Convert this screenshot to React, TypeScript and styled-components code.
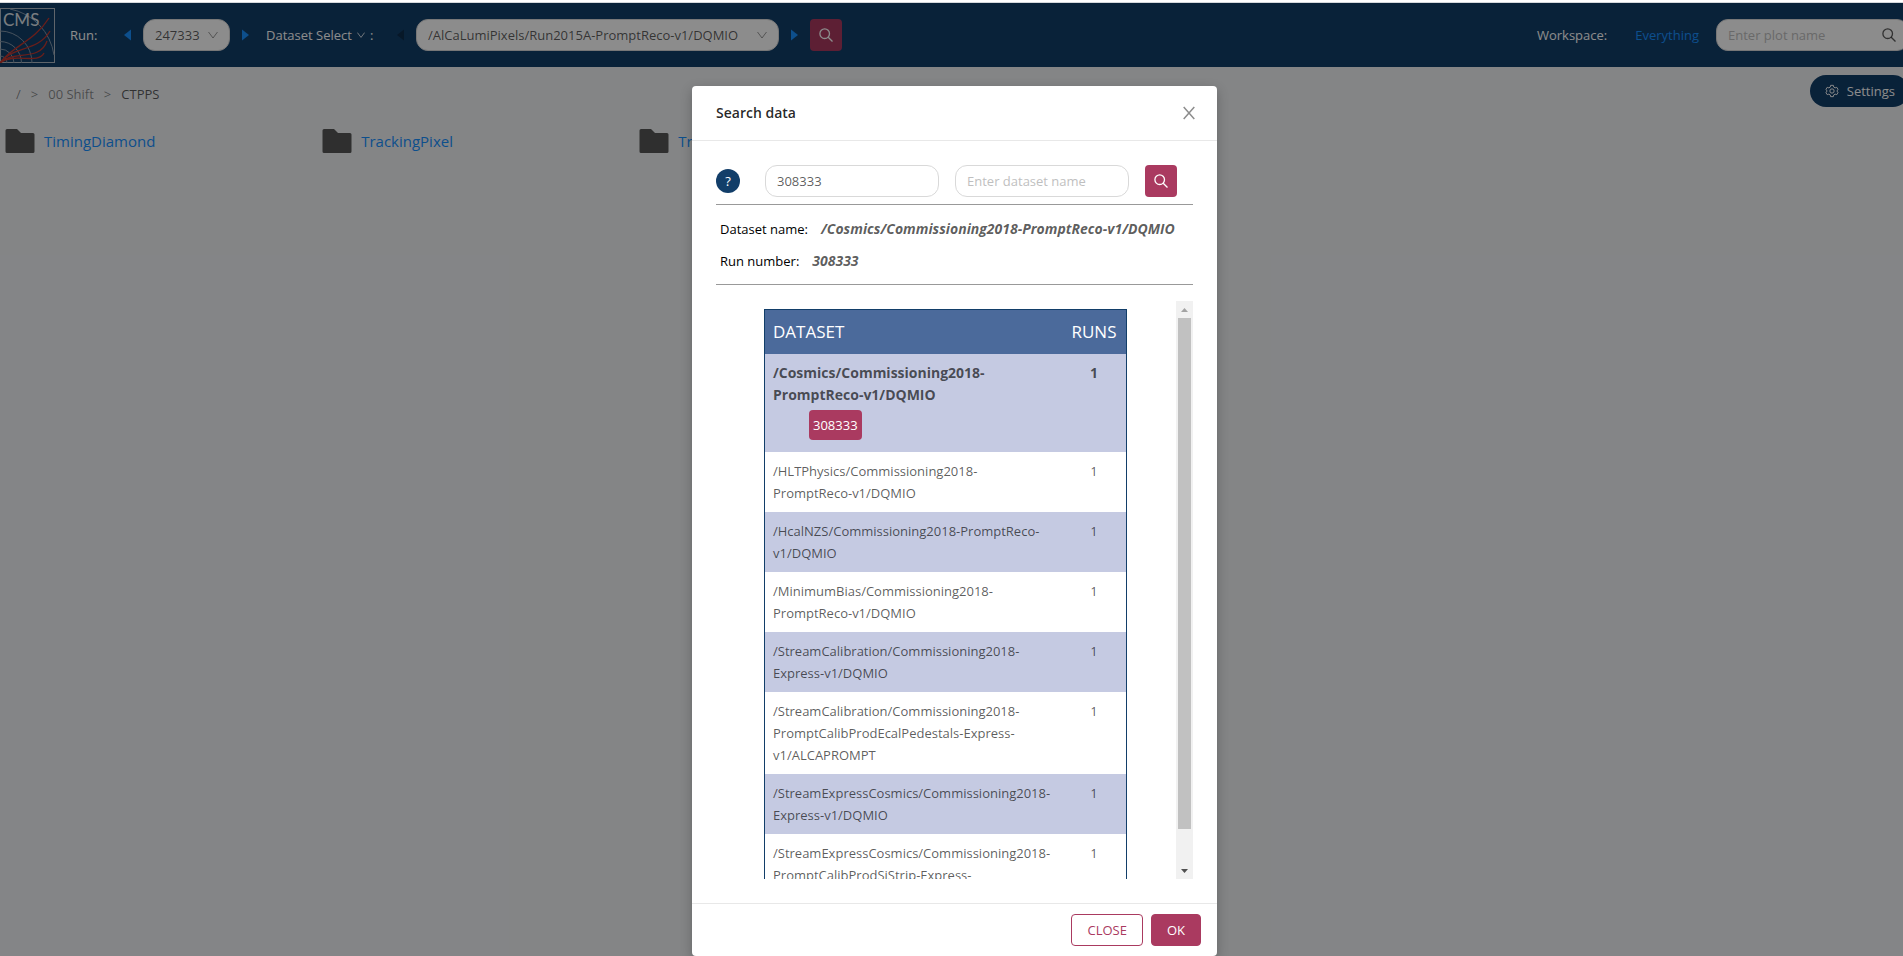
import React from 'react';
import styled, { createGlobalStyle } from 'styled-components';

const navy = '#123e69';
const pink = '#aa3a60';
const link = '#1890ff';

const GlobalStyle = createGlobalStyle`
  *, *::before, *::after { box-sizing: border-box; }
  body {
    margin: 0;
    background: #f0f2f5;
    color: rgba(0, 0, 0, 0.65);
    font-family: "Open Sans", "Noto Sans", sans-serif;
    font-size: 13px;
    line-height: 22px;
  }
  button, input, select { font: inherit; }
  svg { display: block; flex: none; }
`;

const Page = styled.div`
  display: flex;
  flex-direction: column;
  min-height: 100vh;
  overflow: hidden;
`;

const TopStrip = styled.div`
  height: 3px;
  background: #fff;
  border-bottom: 1px solid #d5d8dc;
`;

const Stage = styled.div`
  position: relative;
  flex: 1;
  display: grid;
  overflow: hidden;
`;

const Shell = styled.div`
  grid-area: 1 / 1;
  min-width: 0;
`;

const Overlay = styled.div`
  grid-area: 1 / 1;
  z-index: 1;
  display: flex;
  justify-content: center;
  align-items: flex-start;
  padding: 83px 0 0 6px;
  background: rgba(0, 0, 0, 0.45);
`;

const TopBar = styled.header`
  display: flex;
  align-items: center;
  height: 64px;
  margin-right: -6px;
  background: ${navy};
  color: #fff;
`;

const Logo = styled.a`
  display: block;
  margin-right: 15px;
`;

const BarLabel = styled.label<{ $width: number; $indent?: number }>`
  display: flex;
  align-items: center;
  gap: 5px;
  width: ${(p) => p.$width}px;
  padding-left: ${(p) => p.$indent ?? 0}px;
`;

const Step = styled.button`
  display: flex;
  align-items: center;
  justify-content: center;
  width: 31px;
  height: 32px;
  padding: 0;
  border: 0;
  background: none;
  color: ${link};
  &:disabled { color: #0e2c49; }
`;

const SelectBox = styled.span<{ $width: number }>`
  display: grid;
  align-items: center;
  width: ${(p) => p.$width}px;
  color: rgba(0, 0, 0, 0.4);
  & > * { grid-area: 1 / 1; }
  & > svg { justify-self: end; margin-right: 12px; pointer-events: none; }
`;

const Select = styled.select`
  appearance: none;
  width: 100%;
  height: 32px;
  padding: 0 0 0 11px;
  border: 1px solid #d9d9d9;
  border-radius: 12px;
  background: #fff;
  color: rgba(0, 0, 0, 0.65);
`;

const IconButton = styled.button`
  display: flex;
  align-items: center;
  justify-content: center;
  width: 32px;
  height: 32px;
  padding: 0;
  border: 0;
  border-radius: 4px;
  background: ${pink};
  color: #fff;
`;

const Workspace = styled.div`
  display: flex;
  align-items: center;
  gap: 28px;
  margin-left: auto;
  margin-right: 17px;
`;

const Anchor = styled.a`
  color: ${link};
  text-decoration: none;
`;

const PlotSearch = styled.div`
  display: flex;
  align-items: center;
  width: 193px;
  height: 32px;
  padding: 0 12px 0 11px;
  border: 1px solid #d9d9d9;
  border-radius: 12px;
  background: #fff;
  color: rgba(0, 0, 0, 0.65);
`;

const PlotInput = styled.input`
  flex: 1;
  min-width: 0;
  padding: 0;
  border: 0;
  outline: 0;
  background: none;
  color: inherit;
  &::placeholder { color: #bfbfbf; opacity: 1; }
`;

const SubBar = styled.div`
  display: flex;
  justify-content: space-between;
  padding: 8px 0 0 16px;
  margin-right: -6px;
`;

const Crumbs = styled.nav`
  display: flex;
  gap: 10px;
  padding-top: 8px;
  color: rgba(0, 0, 0, 0.45);
`;

const Crumb = styled.a<{ $current?: boolean }>`
  color: ${(p) => (p.$current ? 'rgba(0, 0, 0, 0.65)' : 'inherit')};
  text-decoration: none;
`;

const Settings = styled.button`
  display: flex;
  align-items: center;
  gap: 8px;
  height: 32px;
  padding: 0 14px 0 15px;
  border: 0;
  border-radius: 16px;
  background: ${navy};
  color: #fff;
`;

const Folders = styled.div`
  display: grid;
  grid-template-columns: repeat(6, 1fr);
  padding-top: 22px;
`;

const Folder = styled.a`
  display: flex;
  align-items: center;
  gap: 9px;
  padding-left: 5px;
  color: ${link};
  font-size: 15px;
  line-height: 24px;
  text-decoration: none;
`;

const Modal = styled.section`
  width: 525px;
  border-radius: 4px;
  background: #fff;
  box-shadow: 0 4px 12px rgba(0, 0, 0, 0.25);
`;

const ModalHead = styled.header`
  display: flex;
  align-items: center;
  justify-content: space-between;
  height: 55px;
  padding: 0 22px 0 24px;
  border-bottom: 1px solid #e8e8e8;
`;

const Title = styled.h2`
  margin: 0;
  color: rgba(0, 0, 0, 0.85);
  font-size: 14px;
  font-weight: 600;
`;

const PlainButton = styled.button`
  padding: 0;
  border: 0;
  background: none;
  color: rgba(0, 0, 0, 0.45);
`;

const ModalBody = styled.div`
  padding: 24px;
`;

const SearchRow = styled.form`
  display: flex;
  align-items: center;
  gap: 16px;
  padding-bottom: 7px;
  border-bottom: 1px solid #999;
`;

const Help = styled.button`
  width: 24px;
  height: 24px;
  margin-right: 9px;
  padding: 0;
  border: 0;
  border-radius: 50%;
  background: ${navy};
  color: #fff;
`;

const Field = styled.input`
  width: 174px;
  height: 32px;
  padding: 0 11px;
  border: 1px solid #d9d9d9;
  border-radius: 12px;
  background: #fff;
  color: rgba(0, 0, 0, 0.65);
  &::placeholder { color: #bfbfbf; opacity: 1; }
`;

const Details = styled.dl`
  margin: 0;
  padding: 8px 4px 7px;
  border-bottom: 1px solid #999;
`;

const Detail = styled.div`
  display: flex;
  gap: 13px;
  line-height: 32px;
  white-space: nowrap;
`;

const Term = styled.dt`
  color: #000;
`;

const Value = styled.dd`
  margin: 0;
  font-size: 14px;
  font-weight: 700;
  font-style: italic;
`;

const Results = styled.div`
  display: flex;
  height: 578px;
  margin-top: 16px;
`;

const ResultsView = styled.div`
  flex: 1;
  overflow-y: auto;
  scrollbar-width: none;
  padding: 8px 49px 0 48px;
`;

const ScrollBar = styled.div`
  display: flex;
  flex-direction: column;
  align-items: center;
  width: 17px;
  background: #f1f1f1;
`;

const ScrollArrow = styled.span`
  display: grid;
  place-items: center;
  height: 17px;
  color: #505050;
  &:first-child { color: #a3a3a3; }
`;

const ScrollTrack = styled.div`
  flex: 1;
  width: 13px;
`;

const ScrollThumb = styled.div`
  height: 94%;
  background: #c1c1c1;
`;

const Table = styled.table`
  width: 100%;
  table-layout: fixed;
  border: 1px solid ${navy};
  border-spacing: 0;
`;

const HeadCell = styled.th<{ $runs?: boolean }>`
  width: ${(p) => (p.$runs ? '64px' : 'auto')};
  height: 44px;
  padding: 0 8px;
  background: #4b6a9b;
  color: #fff;
  font-size: 17px;
  font-weight: 400;
  text-align: ${(p) => (p.$runs ? 'center' : 'left')};
`;

const Row = styled.tr<{ $open?: boolean }>`
  font-size: ${(p) => (p.$open ? 14 : 13)}px;
  font-weight: ${(p) => (p.$open ? 700 : 400)};
  &:nth-child(odd) { background: #c5cae2; }
`;

const Cell = styled.td<{ $runs?: boolean }>`
  padding: 8px;
  vertical-align: top;
  text-align: ${(p) => (p.$runs ? 'center' : 'left')};
`;

const RunButton = styled.button`
  display: block;
  height: 30px;
  margin: 4px 0 4px 36px;
  padding: 0 4px;
  border: 0;
  border-radius: 4px;
  background: ${pink};
  color: #fff;
  font-size: 13px;
  font-weight: 400;
`;

const ModalFoot = styled.footer`
  display: flex;
  justify-content: flex-end;
  gap: 8px;
  padding: 10px 16px;
  border-top: 1px solid #e8e8e8;
`;

const ActionButton = styled.button<{ $solid?: boolean }>`
  height: 32px;
  padding: 0 15px;
  border: 1px solid ${pink};
  border-radius: 4px;
  background: ${(p) => (p.$solid ? pink : '#fff')};
  color: ${(p) => (p.$solid ? '#fff' : pink)};
`;

const Chevron = ({ size = 10 }: { size?: number }) => (
  <svg width={size} height={size} viewBox="0 0 10 10" fill="none" stroke="currentColor">
    <path d="M0.5 2 L5 8 L9.5 2" />
  </svg>
);

const Triangle = ({ dir }: { dir: 'left' | 'right' }) => (
  <svg width="7" height="12" viewBox="0 0 7 12" fill="currentColor">
    <path d={dir === 'left' ? 'M7 0.5 V11.5 L0 6 Z' : 'M0 0.5 V11.5 L7 6 Z'} />
  </svg>
);

const SearchIcon = ({ size = 14 }: { size?: number }) => (
  <svg width={size} height={size} viewBox="0 0 14 14" fill="none" stroke="currentColor" strokeWidth="1.3">
    <circle cx="5.7" cy="5.7" r="4.8" />
    <path d="M9.2 9.2 L13.5 13.5" />
  </svg>
);

const GearIcon = () => (
  <svg width="14" height="14" viewBox="-1 -2 26 26" fill="none" stroke="currentColor" strokeWidth="1.8">
    <path d="M9.5 0.500h5l.7 3.200 2.600 1.500 3.100-1 2.500 4.300-2.400 2.200v.6l2.400 2.200-2.500 4.300-3.100-1-2.600 1.500-.7 3.200h-5l-.7-3.200-2.600-1.500-3.100 1-2.500-4.300L3 11.300v-.6L.6 8.500l2.500-4.300 3.100 1 2.600-1.500z" />
    <circle cx="12" cy="11" r="4" />
  </svg>
);

const FolderIcon = () => (
  <svg width="30" height="24" viewBox="0 0 30 24" fill="#575757">
    <path d="M2 0 H12 L16 4 H28 Q29.500 4 29.500 5.500 V22.500 Q29.500 24 28 24 H2 Q.5 24 .5 22.500 V1.500 Q.5 0 2 0 Z" />
  </svg>
);

const CmsLogo = () => (
  <svg width="55" height="55" viewBox="0 0 55 55" fill="none">
    <rect x="0.500" y="0.500" width="54" height="54" stroke="#aeb9c4" />
    <g stroke="#8397aa">
      <path d="M0 48 A7 7 0 0 1 7 55" />
      <path d="M0 41 A14 14 0 0 1 14 55" />
      <path d="M0 33.500 A21.500 21.500 0 0 1 21.500 55" />
      <path d="M0 23 A32 32 0 0 1 32 55" />
      <path d="M10 1 A55 55 0 0 1 54 47" />
    </g>
    <g stroke="#c2382f" strokeWidth="1.300">
      <path d="M0 55 C12 38 34 34 49 10" />
      <path d="M0 55 C12 38 38 44 50 23" />
      <path d="M0 55 C12 42 40 54 47 33" />
      <path d="M0 55 C14 44 38 57 44 45" />
    </g>
    <text x="3" y="18" fill="#dfe4e9" fontFamily="Lato, sans-serif" fontSize="17">CMS</text>
  </svg>
);

const datasets = [
  '/Cosmics/Commissioning2018-PromptReco-v1/DQMIO',
  '/HLTPhysics/Commissioning2018-PromptReco-v1/DQMIO',
  '/HcalNZS/Commissioning2018-PromptReco-v1/DQMIO',
  '/MinimumBias/Commissioning2018-PromptReco-v1/DQMIO',
  '/StreamCalibration/Commissioning2018-Express-v1/DQMIO',
  '/StreamCalibration/Commissioning2018-PromptCalibProdEcalPedestals-Express-v1/ALCAPROMPT',
  '/StreamExpressCosmics/Commissioning2018-Express-v1/DQMIO',
  '/StreamExpressCosmics/Commissioning2018-PromptCalibProdSiStrip-Express-v1/ALCAPROMPT',
];

const folders = ['TimingDiamond', 'TrackingPixel', 'TrackingStrip'];

export default function App() {
  return (
    <Page>
      <GlobalStyle />
      <TopStrip />
      <Stage>
        <Shell>
          <TopBar>
            <Logo href="#" aria-label="CMS"><CmsLogo /></Logo>
            <BarLabel $width={42} htmlFor="run">Run:</BarLabel>
            <Step aria-label="Previous run"><Triangle dir="left" /></Step>
            <SelectBox $width={87}>
              <Select id="run"><option>247333</option></Select>
              <Chevron />
            </SelectBox>
            <Step aria-label="Next run"><Triangle dir="right" /></Step>
            <BarLabel $width={124} $indent={5} htmlFor="dataset">Dataset Select <Chevron size={8} />:</BarLabel>
            <Step aria-label="Previous dataset" disabled><Triangle dir="left" /></Step>
            <SelectBox $width={363}>
              <Select id="dataset"><option>/AlCaLumiPixels/Run2015A-PromptReco-v1/DQMIO</option></Select>
              <Chevron />
            </SelectBox>
            <Step aria-label="Next dataset"><Triangle dir="right" /></Step>
            <IconButton aria-label="Search data"><SearchIcon /></IconButton>
            <Workspace>
              <span>Workspace:</span>
              <Anchor href="#">Everything</Anchor>
            </Workspace>
            <PlotSearch>
              <PlotInput aria-label="Plot name" placeholder="Enter plot name" />
              <SearchIcon />
            </PlotSearch>
          </TopBar>
          <SubBar>
            <Crumbs>
              <Crumb href="#">/</Crumb>
              <span>&gt;</span>
              <Crumb href="#">00 Shift</Crumb>
              <span>&gt;</span>
              <Crumb href="#" $current>CTPPS</Crumb>
            </Crumbs>
            <Settings><GearIcon />Settings</Settings>
          </SubBar>
          <Folders>
            {folders.map((name) => (
              <Folder href="#" key={name}><FolderIcon />{name}</Folder>
            ))}
          </Folders>
        </Shell>
        <Overlay>
          <Modal role="dialog" aria-labelledby="title">
            <ModalHead>
              <Title id="title">Search data</Title>
              <PlainButton aria-label="Close dialog">
                <svg width="12" height="14" viewBox="0 0 12 14" fill="none" stroke="currentColor" strokeWidth="1.500">
                  <path d="M0.700 1 L11.300 13 M11.300 1 L0.700 13" />
                </svg>
              </PlainButton>
            </ModalHead>
            <ModalBody>
              <SearchRow>
                <Help type="button">?</Help>
                <Field aria-label="Run number" defaultValue="308333" />
                <Field aria-label="Dataset name" placeholder="Enter dataset name" />
                <IconButton type="button" aria-label="Search"><SearchIcon /></IconButton>
              </SearchRow>
              <Details>
                <Detail><Term>Dataset name:</Term><Value>/Cosmics/Commissioning2018-PromptReco-v1/DQMIO</Value></Detail>
                <Detail><Term>Run number:</Term><Value>308333</Value></Detail>
              </Details>
              <Results>
                <ResultsView>
                  <Table>
                    <thead>
                      <tr><HeadCell>DATASET</HeadCell><HeadCell $runs>RUNS</HeadCell></tr>
                    </thead>
                    <tbody>
                      {datasets.map((name, i) => (
                        <Row key={name} $open={i === 0}>
                          <Cell>
                            {name}
                            {i === 0 && <RunButton>308333</RunButton>}
                          </Cell>
                          <Cell $runs>1</Cell>
                        </Row>
                      ))}
                    </tbody>
                  </Table>
                </ResultsView>
                <ScrollBar aria-hidden="true">
                  <ScrollArrow><svg width="7" height="4" viewBox="0 0 7 4" fill="currentColor"><path d="M0 4 L3.500 0 L7 4 Z" /></svg></ScrollArrow>
                  <ScrollTrack><ScrollThumb /></ScrollTrack>
                  <ScrollArrow><svg width="7" height="4" viewBox="0 0 7 4" fill="currentColor"><path d="M0 0 L3.500 4 L7 0 Z" /></svg></ScrollArrow>
                </ScrollBar>
              </Results>
            </ModalBody>
            <ModalFoot>
              <ActionButton>CLOSE</ActionButton>
              <ActionButton $solid>OK</ActionButton>
            </ModalFoot>
          </Modal>
        </Overlay>
      </Stage>
    </Page>
  );
}
